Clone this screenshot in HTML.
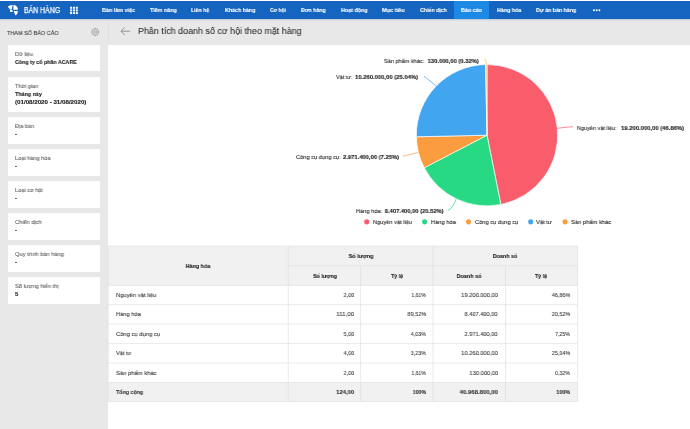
<!DOCTYPE html>
<html><head><meta charset="utf-8"><title>Báo cáo</title>
<style>
*{box-sizing:border-box;margin:0;padding:0}
html,body{width:690px;height:429px;overflow:hidden;background:#fff;font-family:"Liberation Sans",sans-serif}
body{position:relative}
.t{position:absolute;height:10px;line-height:10px;white-space:nowrap;will-change:transform}
b{font-weight:bold}
#bar{position:absolute;left:0;top:1px;width:690px;height:17.7px;background:#1565c0}
#act{position:absolute;left:453.9px;top:1px;width:34.8px;height:17.7px;background:#1e88e5}
#shadow{position:absolute;left:0;top:18.7px;width:690px;height:2px;background:linear-gradient(#b9c6d6,#e8e8e8)}
#gray{position:absolute;left:0;top:18.6px;width:690px;height:411px;background:#e8e8e8}
#panel{position:absolute;left:108.2px;top:44.7px;width:582px;height:385px;background:#fff}
#vline{position:absolute;left:108px;top:20px;width:0.6px;height:25px;background:#e1e1e1}
.card{position:absolute;left:7.9px;width:92.2px;height:26.8px;background:#fff}
svg{position:absolute;left:0;top:0}
</style></head><body>
<div id="gray"></div><div id="shadow"></div><div id="vline"></div>
<div id="bar"></div><div id="act"></div>
<div id="panel"></div>
<div class="card" style="top:44.7px;height:26.5px"></div>
<div class="card" style="top:76.7px;height:35.1px"></div>
<div class="card" style="top:117px"></div>
<div class="card" style="top:149px"></div>
<div class="card" style="top:181px"></div>
<div class="card" style="top:213px"></div>
<div class="card" style="top:245px"></div>
<div class="card" style="top:277px"></div>
<svg width="690" height="429" viewBox="0 0 690 429">
<!-- logo -->
<g fill="#fff">
<path d="M7.7 6.6 Q9.8 4.9 12.8 5 L11.6 9.6 Q10.6 9.9 10 9.4 Z"/>
<rect x="10" y="10.1" width="2.7" height="2" rx="0.7"/>
<path d="M13.5 5.1 A4.5 4.5 0 0 1 18 9.7 L13.3 9.7 Z"/>
<path d="M13.8 11 L18 11 Q17.8 13.8 15.5 15.6 Q14.2 13.6 13.8 11 Z"/>
</g>
<!-- grid -->
<g fill="#fff">
<rect x="70.10" y="6.75" width="2" height="2"/><rect x="70.10" y="9.40" width="2" height="2"/><rect x="70.10" y="12.05" width="2" height="2"/><rect x="72.97" y="6.75" width="2" height="2"/><rect x="72.97" y="9.40" width="2" height="2"/><rect x="72.97" y="12.05" width="2" height="2"/><rect x="75.84" y="6.75" width="2" height="2"/><rect x="75.84" y="9.40" width="2" height="2"/><rect x="75.84" y="12.05" width="2" height="2"/>
</g>
<!-- dots -->
<g fill="#fff"><circle cx="594" cy="10.3" r="1"/><circle cx="596.7" cy="10.3" r="1"/><circle cx="599.4" cy="10.3" r="1"/></g>
<!-- gear -->
<g fill="none" stroke="#86707a" stroke-width="0.6">
<path d="M97.99 31.23L98.85 31.43L98.85 32.57L97.99 32.77L97.75 33.36L98.22 34.11L97.41 34.92L96.66 34.45L96.07 34.69L95.87 35.55L94.73 35.55L94.53 34.69L93.94 34.45L93.19 34.92L92.38 34.11L92.85 33.36L92.61 32.77L91.75 32.57L91.75 31.43L92.61 31.23L92.85 30.64L92.38 29.89L93.19 29.08L93.94 29.55L94.53 29.31L94.73 28.45L95.87 28.45L96.07 29.31L96.66 29.55L97.41 29.08L98.22 29.89L97.75 30.64Z"/><circle cx="95.3" cy="32.0" r="1.3"/>
</g>
<!-- back arrow -->
<path d="M130 31.2H121.2M124.8 27.4L121 31.2L124.8 35" fill="none" stroke="#7d6570" stroke-width="0.7"/>
<path d="M487.0 135.2L487.00 64.50A70.7 70.7 0 0 1 500.84 204.53Z" fill="#f95c6b" stroke="#fff" stroke-width="0.7" stroke-linejoin="round"/>
<path d="M487.0 135.2L500.84 204.53A70.7 70.7 0 0 1 424.24 167.74Z" fill="#27d982" stroke="#fff" stroke-width="0.7" stroke-linejoin="round"/>
<path d="M487.0 135.2L424.24 167.74A70.7 70.7 0 0 1 416.32 136.81Z" fill="#fb9d3f" stroke="#fff" stroke-width="0.7" stroke-linejoin="round"/>
<path d="M487.0 135.2L416.32 136.81A70.7 70.7 0 0 1 485.58 64.51Z" fill="#42a5f0" stroke="#fff" stroke-width="0.7" stroke-linejoin="round"/>
<path d="M487.0 135.2L485.58 64.51A70.7 70.7 0 0 1 487.00 64.50Z" fill="#fbb050" stroke="#fff" stroke-width="0.7" stroke-linejoin="round"/>
<path d="M557.3 128.3 Q565 127.2 573 126.7" fill="none" stroke="#f95c6b" stroke-width="0.7"/>
<path d="M456 199.1 Q453.5 207.5 447.9 210.6" fill="none" stroke="#27d982" stroke-width="0.7"/>
<path d="M418.4 152.5 L402.9 156.2" fill="none" stroke="#fb9d3f" stroke-width="0.7"/>
<path d="M436.3 86 L424 76.2" fill="none" stroke="#42a5f0" stroke-width="0.7"/>
<path d="M486.3 64.6 Q486.3 59.3 484.2 59.1" fill="none" stroke="#fbb050" stroke-width="0.7"/>
<circle cx="366.7" cy="221.85" r="2.55" fill="#f95c6b"/>
<circle cx="424.6" cy="221.85" r="2.55" fill="#27d982"/>
<circle cx="468.5" cy="221.85" r="2.55" fill="#fb9d3f"/>
<circle cx="530.7" cy="221.85" r="2.55" fill="#42a5f0"/>
<circle cx="565" cy="221.85" r="2.55" fill="#fb9d3f"/>
<rect x="108.3" y="246.2" width="469.3" height="39.2" fill="#f1f1f1"/>
<rect x="108.3" y="382.5" width="469.3" height="19" fill="#f1f1f1"/>
<path d="M108.3 246.2H577.6" stroke="#dcdcdc" stroke-width="0.6"/>
<path d="M288.3 265.9H577.6" stroke="#dcdcdc" stroke-width="0.6"/>
<path d="M108.3 285.4H577.6" stroke="#dcdcdc" stroke-width="0.6"/>
<path d="M108.3 304.7H577.6" stroke="#dcdcdc" stroke-width="0.6"/>
<path d="M108.3 324.1H577.6" stroke="#dcdcdc" stroke-width="0.6"/>
<path d="M108.3 343.6H577.6" stroke="#dcdcdc" stroke-width="0.6"/>
<path d="M108.3 363.1H577.6" stroke="#dcdcdc" stroke-width="0.6"/>
<path d="M108.3 382.5H577.6" stroke="#dcdcdc" stroke-width="0.6"/>
<path d="M108.3 401.5H577.6" stroke="#dcdcdc" stroke-width="0.6"/>
<path d="M108.3 246.2V401.5" stroke="#dcdcdc" stroke-width="0.6"/>
<path d="M288.3 246.2V401.5" stroke="#dcdcdc" stroke-width="0.6"/>
<path d="M360.6 265.9V401.5" stroke="#dcdcdc" stroke-width="0.6"/>
<path d="M433 246.2V401.5" stroke="#dcdcdc" stroke-width="0.6"/>
<path d="M505.5 265.9V401.5" stroke="#dcdcdc" stroke-width="0.6"/>
<path d="M577.6 246.2V401.5" stroke="#dcdcdc" stroke-width="0.6"/>
</svg>
<div class="t" id="t0" style="left:23.80px;top:5.30px;font-size:8.300px;transform:scaleX(0.8331);transform-origin:left center;-webkit-text-stroke:0.25px #fff;color:#ffffff">BÁN HÀNG</div>
<div class="t" id="t1" style="left:101.50px;top:4.90px;font-size:6.200px;transform:scaleX(0.8744);transform-origin:left center;font-weight:bold;-webkit-text-stroke:0.12px;color:#ffffff">Bàn làm việc</div>
<div class="t" id="t2" style="left:150.00px;top:4.90px;font-size:6.200px;transform:scaleX(0.8712);transform-origin:left center;font-weight:bold;-webkit-text-stroke:0.12px;color:#ffffff">Tiềm năng</div>
<div class="t" id="t3" style="left:191.30px;top:4.90px;font-size:6.200px;transform:scaleX(0.8371);transform-origin:left center;font-weight:bold;-webkit-text-stroke:0.12px;color:#ffffff">Liên hệ</div>
<div class="t" id="t4" style="left:224.80px;top:4.90px;font-size:6.200px;transform:scaleX(0.8561);transform-origin:left center;font-weight:bold;-webkit-text-stroke:0.12px;color:#ffffff">Khách hàng</div>
<div class="t" id="t5" style="left:270.00px;top:4.90px;font-size:6.200px;transform:scaleX(0.8011);transform-origin:left center;font-weight:bold;-webkit-text-stroke:0.12px;color:#ffffff">Cơ hội</div>
<div class="t" id="t6" style="left:300.50px;top:4.90px;font-size:6.200px;transform:scaleX(0.8487);transform-origin:left center;font-weight:bold;-webkit-text-stroke:0.12px;color:#ffffff">Đơn hàng</div>
<div class="t" id="t7" style="left:340.70px;top:4.90px;font-size:6.200px;transform:scaleX(0.8714);transform-origin:left center;font-weight:bold;-webkit-text-stroke:0.12px;color:#ffffff">Hoạt động</div>
<div class="t" id="t8" style="left:382.00px;top:4.90px;font-size:6.200px;transform:scaleX(0.9045);transform-origin:left center;font-weight:bold;-webkit-text-stroke:0.12px;color:#ffffff">Mục tiêu</div>
<div class="t" id="t9" style="left:419.50px;top:4.90px;font-size:6.200px;transform:scaleX(0.8500);transform-origin:left center;font-weight:bold;-webkit-text-stroke:0.12px;color:#ffffff">Chiến dịch</div>
<div class="t" id="t10" style="left:460.50px;top:4.90px;font-size:6.200px;transform:scaleX(0.8679);transform-origin:left center;font-weight:bold;-webkit-text-stroke:0.12px;color:#ffffff">Báo cáo</div>
<div class="t" id="t11" style="left:496.80px;top:4.90px;font-size:6.200px;transform:scaleX(0.8622);transform-origin:left center;font-weight:bold;-webkit-text-stroke:0.12px;color:#ffffff">Hàng hóa</div>
<div class="t" id="t12" style="left:535.50px;top:4.90px;font-size:6.200px;transform:scaleX(0.8557);transform-origin:left center;font-weight:bold;-webkit-text-stroke:0.12px;color:#ffffff">Dự án bán hàng</div>
<div class="t" id="t13" style="left:7.20px;top:27.50px;font-size:6.100px;transform:scaleX(0.9020);transform-origin:left center;-webkit-text-stroke:0.08px;color:#333333">THAM SỐ BÁO CÁO</div>
<div class="t" id="t14" style="left:14.50px;top:48.60px;font-size:5.800px;transform:scaleX(0.9579);transform-origin:left center;-webkit-text-stroke:0.08px;color:#5c5c5c">Dữ liệu</div>
<div class="t" id="t15" style="left:14.50px;top:56.90px;font-size:6.000px;transform:scaleX(0.8859);transform-origin:left center;font-weight:bold;-webkit-text-stroke:0.12px;color:#212121">Công ty cổ phần ACARE</div>
<div class="t" id="t16" style="left:14.50px;top:80.60px;font-size:5.800px;transform:scaleX(0.9520);transform-origin:left center;-webkit-text-stroke:0.08px;color:#5c5c5c">Thời gian</div>
<div class="t" id="t17" style="left:14.50px;top:88.90px;font-size:6.000px;transform:scaleX(0.8937);transform-origin:left center;font-weight:bold;-webkit-text-stroke:0.12px;color:#212121">Tháng này</div>
<div class="t" id="t18" style="left:14.50px;top:97.20px;font-size:6.000px;transform:scaleX(1.0288);transform-origin:left center;font-weight:bold;-webkit-text-stroke:0.12px;color:#212121">(01/08/2020 - 31/08/2020)</div>
<div class="t" id="t19" style="left:14.50px;top:120.90px;font-size:5.800px;transform:scaleX(0.9606);transform-origin:left center;-webkit-text-stroke:0.08px;color:#5c5c5c">Địa bàn</div>
<div class="t" id="t20" style="left:14.90px;top:129.20px;font-size:6.000px;font-weight:bold;-webkit-text-stroke:0.12px;color:#212121">-</div>
<div class="t" id="t21" style="left:14.50px;top:152.90px;font-size:5.800px;transform:scaleX(0.9681);transform-origin:left center;-webkit-text-stroke:0.08px;color:#5c5c5c">Loại hàng hóa</div>
<div class="t" id="t22" style="left:14.90px;top:161.20px;font-size:6.000px;font-weight:bold;-webkit-text-stroke:0.12px;color:#212121">-</div>
<div class="t" id="t23" style="left:14.50px;top:184.90px;font-size:5.800px;transform:scaleX(0.9728);transform-origin:left center;-webkit-text-stroke:0.08px;color:#5c5c5c">Loại cơ hội</div>
<div class="t" id="t24" style="left:14.90px;top:193.20px;font-size:6.000px;font-weight:bold;-webkit-text-stroke:0.12px;color:#212121">-</div>
<div class="t" id="t25" style="left:14.50px;top:216.90px;font-size:5.800px;transform:scaleX(0.9719);transform-origin:left center;-webkit-text-stroke:0.08px;color:#5c5c5c">Chiến dịch</div>
<div class="t" id="t26" style="left:14.90px;top:225.20px;font-size:6.000px;font-weight:bold;-webkit-text-stroke:0.12px;color:#212121">-</div>
<div class="t" id="t27" style="left:14.50px;top:248.90px;font-size:5.800px;transform:scaleX(0.9841);transform-origin:left center;-webkit-text-stroke:0.08px;color:#5c5c5c">Quy trình bán hàng</div>
<div class="t" id="t28" style="left:14.90px;top:257.20px;font-size:6.000px;font-weight:bold;-webkit-text-stroke:0.12px;color:#212121">-</div>
<div class="t" id="t29" style="left:14.50px;top:280.90px;font-size:5.800px;transform:scaleX(0.9824);transform-origin:left center;-webkit-text-stroke:0.08px;color:#5c5c5c">Số lượng hiển thị</div>
<div class="t" id="t30" style="left:14.90px;top:289.20px;font-size:6.000px;font-weight:bold;-webkit-text-stroke:0.12px;color:#212121">5</div>
<div class="t" id="t31" style="left:137.60px;top:26.00px;font-size:9.300px;transform:scaleX(0.9600);transform-origin:left center;-webkit-text-stroke:0.08px;color:#2e2e2e">Phân tích doanh số cơ hội theo mặt hàng</div>
<div class="t" id="t32" style="left:384.30px;top:55.60px;font-size:6.250px;transform:scaleX(0.8934);transform-origin:left center;-webkit-text-stroke:0.08px;color:#212121">Sản phẩm khác:</div>
<div class="t" id="t33" style="right:211.10px;top:55.60px;font-size:6.250px;transform:scaleX(0.9346);transform-origin:right center;font-weight:bold;-webkit-text-stroke:0.12px;color:#212121">130.000,00 (0.32%)</div>
<div class="t" id="t34" style="left:336.30px;top:72.10px;font-size:6.250px;transform:scaleX(0.8746);transform-origin:left center;-webkit-text-stroke:0.08px;color:#212121">Vật tư:</div>
<div class="t" id="t35" style="right:271.80px;top:72.10px;font-size:6.250px;transform:scaleX(0.9405);transform-origin:right center;font-weight:bold;-webkit-text-stroke:0.12px;color:#212121">10.260.000,00 (25.04%)</div>
<div class="t" id="t36" style="left:295.50px;top:151.70px;font-size:6.250px;transform:scaleX(0.9105);transform-origin:left center;-webkit-text-stroke:0.08px;color:#212121">Công cụ dụng cụ:</div>
<div class="t" id="t37" style="right:291.30px;top:151.70px;font-size:6.250px;transform:scaleX(0.9334);transform-origin:right center;font-weight:bold;-webkit-text-stroke:0.12px;color:#212121">2.971.400,00 (7.25%)</div>
<div class="t" id="t38" style="left:355.50px;top:205.90px;font-size:6.250px;transform:scaleX(0.9038);transform-origin:left center;-webkit-text-stroke:0.08px;color:#212121">Hàng hóa:</div>
<div class="t" id="t39" style="right:246.90px;top:205.90px;font-size:6.250px;transform:scaleX(0.9251);transform-origin:right center;font-weight:bold;-webkit-text-stroke:0.12px;color:#212121">8.407.400,00 (20.52%)</div>
<div class="t" id="t40" style="left:577.30px;top:122.70px;font-size:6.250px;transform:scaleX(0.8842);transform-origin:left center;-webkit-text-stroke:0.08px;color:#212121">Nguyên vật liệu:</div>
<div class="t" id="t41" style="right:6.00px;top:122.70px;font-size:6.250px;transform:scaleX(0.9404);transform-origin:right center;font-weight:bold;-webkit-text-stroke:0.12px;color:#212121">19.200.000,00 (46.86%)</div>
<div class="t" id="t42" style="left:372.80px;top:217.30px;font-size:6.250px;transform:scaleX(0.9077);transform-origin:left center;-webkit-text-stroke:0.08px;color:#212121">Nguyên vật liệu</div>
<div class="t" id="t43" style="left:430.50px;top:217.30px;font-size:6.250px;transform:scaleX(0.9143);transform-origin:left center;-webkit-text-stroke:0.08px;color:#212121">Hàng hóa</div>
<div class="t" id="t44" style="left:474.60px;top:217.30px;font-size:6.250px;transform:scaleX(0.9151);transform-origin:left center;-webkit-text-stroke:0.08px;color:#212121">Công cụ dụng cụ</div>
<div class="t" id="t45" style="left:536.10px;top:217.30px;font-size:6.250px;transform:scaleX(0.9294);transform-origin:left center;-webkit-text-stroke:0.08px;color:#212121">Vật tư</div>
<div class="t" id="t46" style="left:570.80px;top:217.30px;font-size:6.250px;transform:scaleX(0.9274);transform-origin:left center;-webkit-text-stroke:0.08px;color:#212121">Sản phẩm khác</div>
<div class="t" id="t47" style="left:98.10px;width:200px;text-align:center;top:260.70px;font-size:6.250px;transform:scaleX(0.8761);transform-origin:center center;font-weight:bold;-webkit-text-stroke:0.12px;color:#212121"><span>Hàng hóa</span></div>
<div class="t" id="t48" style="left:261.40px;width:200px;text-align:center;top:251.20px;font-size:6.250px;transform:scaleX(0.8864);transform-origin:center center;font-weight:bold;-webkit-text-stroke:0.12px;color:#212121"><span>Số lượng</span></div>
<div class="t" id="t49" style="left:405.40px;width:200px;text-align:center;top:251.20px;font-size:6.250px;transform:scaleX(0.8602);transform-origin:center center;font-weight:bold;-webkit-text-stroke:0.12px;color:#212121"><span>Doanh số</span></div>
<div class="t" id="t50" style="left:225.00px;width:200px;text-align:center;top:270.60px;font-size:6.250px;transform:scaleX(0.8450);transform-origin:center center;font-weight:bold;-webkit-text-stroke:0.12px;color:#212121"><span>Số lượng</span></div>
<div class="t" id="t51" style="left:296.50px;width:200px;text-align:center;top:270.60px;font-size:6.250px;transform:scaleX(0.8430);transform-origin:center center;font-weight:bold;-webkit-text-stroke:0.12px;color:#212121"><span>Tỷ lệ</span></div>
<div class="t" id="t52" style="left:369.10px;width:200px;text-align:center;top:270.60px;font-size:6.250px;transform:scaleX(0.8727);transform-origin:center center;font-weight:bold;-webkit-text-stroke:0.12px;color:#212121"><span>Doanh số</span></div>
<div class="t" id="t53" style="left:441.40px;width:200px;text-align:center;top:270.60px;font-size:6.250px;transform:scaleX(0.8651);transform-origin:center center;font-weight:bold;-webkit-text-stroke:0.12px;color:#212121"><span>Tỷ lệ</span></div>
<div class="t" id="t54" style="left:115.50px;top:289.90px;font-size:6.250px;transform:scaleX(0.9351);transform-origin:left center;-webkit-text-stroke:0.08px;color:#333333">Nguyên vật liệu</div>
<div class="t" id="t55" style="right:336.10px;top:289.90px;font-size:6.250px;transform:scaleX(0.8697);transform-origin:right center;-webkit-text-stroke:0.08px;color:#333333">2,00</div>
<div class="t" id="t56" style="right:264.20px;top:289.90px;font-size:6.250px;transform:scaleX(0.8018);transform-origin:right center;-webkit-text-stroke:0.08px;color:#333333">1,61%</div>
<div class="t" id="t57" style="right:192.00px;top:289.90px;font-size:6.250px;transform:scaleX(0.9202);transform-origin:right center;-webkit-text-stroke:0.08px;color:#333333">19.200.000,00</div>
<div class="t" id="t58" style="right:119.80px;top:289.90px;font-size:6.250px;transform:scaleX(0.8677);transform-origin:right center;-webkit-text-stroke:0.08px;color:#333333">46,86%</div>
<div class="t" id="t59" style="left:115.50px;top:309.30px;font-size:6.250px;transform:scaleX(0.9143);transform-origin:left center;-webkit-text-stroke:0.08px;color:#333333">Hàng hóa</div>
<div class="t" id="t60" style="right:336.10px;top:309.30px;font-size:6.250px;transform:scaleX(0.9791);transform-origin:right center;-webkit-text-stroke:0.08px;color:#333333">111,00</div>
<div class="t" id="t61" style="right:264.20px;top:309.30px;font-size:6.250px;transform:scaleX(0.8857);transform-origin:right center;-webkit-text-stroke:0.08px;color:#333333">89,52%</div>
<div class="t" id="t62" style="right:192.80px;top:309.30px;font-size:6.250px;transform:scaleX(0.9031);transform-origin:right center;-webkit-text-stroke:0.08px;color:#333333">8.407.400,00</div>
<div class="t" id="t63" style="right:119.80px;top:309.30px;font-size:6.250px;transform:scaleX(0.8677);transform-origin:right center;-webkit-text-stroke:0.08px;color:#333333">20,52%</div>
<div class="t" id="t64" style="left:115.50px;top:328.80px;font-size:6.250px;transform:scaleX(0.9322);transform-origin:left center;-webkit-text-stroke:0.08px;color:#333333">Công cụ dụng cụ</div>
<div class="t" id="t65" style="right:336.10px;top:328.80px;font-size:6.250px;transform:scaleX(0.8697);transform-origin:right center;-webkit-text-stroke:0.08px;color:#333333">5,00</div>
<div class="t" id="t66" style="right:264.20px;top:328.80px;font-size:6.250px;transform:scaleX(0.8453);transform-origin:right center;-webkit-text-stroke:0.08px;color:#333333">4,03%</div>
<div class="t" id="t67" style="right:192.80px;top:328.80px;font-size:6.250px;transform:scaleX(0.9031);transform-origin:right center;-webkit-text-stroke:0.08px;color:#333333">2.971.400,00</div>
<div class="t" id="t68" style="right:119.80px;top:328.80px;font-size:6.250px;transform:scaleX(0.8253);transform-origin:right center;-webkit-text-stroke:0.08px;color:#333333">7,25%</div>
<div class="t" id="t69" style="left:115.50px;top:348.20px;font-size:6.250px;transform:scaleX(0.8950);transform-origin:left center;-webkit-text-stroke:0.08px;color:#333333">Vật tư</div>
<div class="t" id="t70" style="right:336.10px;top:348.20px;font-size:6.250px;transform:scaleX(0.8697);transform-origin:right center;-webkit-text-stroke:0.08px;color:#333333">4,00</div>
<div class="t" id="t71" style="right:264.20px;top:348.20px;font-size:6.250px;transform:scaleX(0.8453);transform-origin:right center;-webkit-text-stroke:0.08px;color:#333333">3,23%</div>
<div class="t" id="t72" style="right:192.00px;top:348.20px;font-size:6.250px;transform:scaleX(0.9202);transform-origin:right center;-webkit-text-stroke:0.08px;color:#333333">10.260.000,00</div>
<div class="t" id="t73" style="right:119.80px;top:348.20px;font-size:6.250px;transform:scaleX(0.8677);transform-origin:right center;-webkit-text-stroke:0.08px;color:#333333">25,04%</div>
<div class="t" id="t74" style="left:115.50px;top:367.70px;font-size:6.250px;transform:scaleX(0.9366);transform-origin:left center;-webkit-text-stroke:0.08px;color:#333333">Sản phẩm khác</div>
<div class="t" id="t75" style="right:336.10px;top:367.70px;font-size:6.250px;transform:scaleX(0.8697);transform-origin:right center;-webkit-text-stroke:0.08px;color:#333333">2,00</div>
<div class="t" id="t76" style="right:264.20px;top:367.70px;font-size:6.250px;transform:scaleX(0.8018);transform-origin:right center;-webkit-text-stroke:0.08px;color:#333333">1,61%</div>
<div class="t" id="t77" style="right:192.00px;top:367.70px;font-size:6.250px;transform:scaleX(0.9226);transform-origin:right center;-webkit-text-stroke:0.08px;color:#333333">130.000,00</div>
<div class="t" id="t78" style="right:119.80px;top:367.70px;font-size:6.250px;transform:scaleX(0.8244);transform-origin:right center;-webkit-text-stroke:0.08px;color:#333333">0,32%</div>
<div class="t" id="t79" style="left:115.50px;top:387.10px;font-size:6.250px;transform:scaleX(0.8506);transform-origin:left center;font-weight:bold;-webkit-text-stroke:0.12px;color:#333333">Tổng cộng</div>
<div class="t" id="t80" style="right:336.10px;top:387.10px;font-size:6.250px;transform:scaleX(0.9368);transform-origin:right center;font-weight:bold;-webkit-text-stroke:0.12px;color:#333333">124,00</div>
<div class="t" id="t81" style="right:264.20px;top:387.10px;font-size:6.250px;transform:scaleX(0.8259);transform-origin:right center;font-weight:bold;-webkit-text-stroke:0.12px;color:#333333">100%</div>
<div class="t" id="t82" style="right:192.00px;top:387.10px;font-size:6.250px;transform:scaleX(0.9603);transform-origin:right center;font-weight:bold;-webkit-text-stroke:0.12px;color:#333333">40.968.800,00</div>
<div class="t" id="t83" style="right:119.80px;top:387.10px;font-size:6.250px;transform:scaleX(0.8520);transform-origin:right center;font-weight:bold;-webkit-text-stroke:0.12px;color:#333333">100%</div>
</body></html>
